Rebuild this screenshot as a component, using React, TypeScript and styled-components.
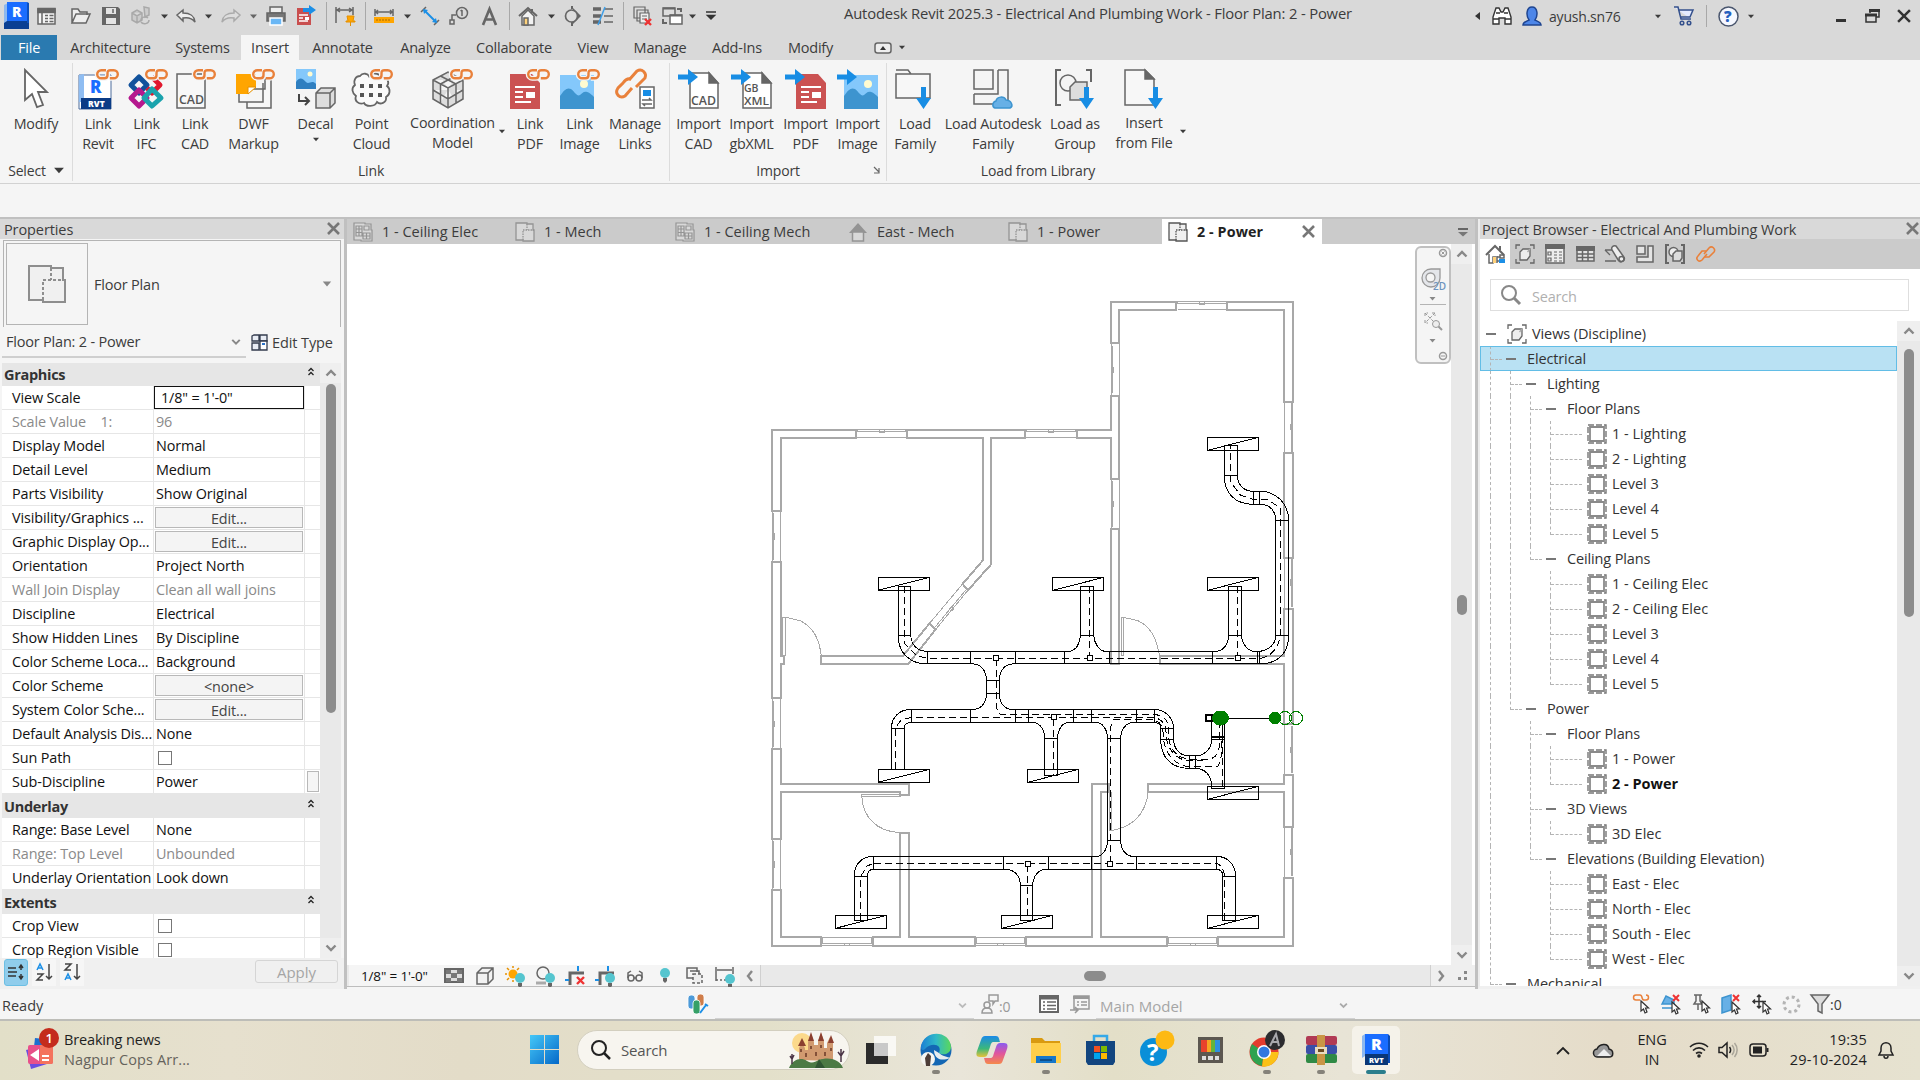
import React from "react";
import styled, { createGlobalStyle, css } from "styled-components";

const FONT = `"Open Sans", "Noto Sans", "Liberation Sans", sans-serif`;

const Global = createGlobalStyle`
  * { box-sizing: border-box; }
  html, body { margin: 0; padding: 0; background: #f5f5f5; overflow: hidden; }
  body { font-family: ${FONT}; font-size: 14px; color: #3c3c3c; }
  svg { display: block; flex: none; overflow: visible; }
`;

/* ------------------------------------------------------------------ */
/* Shared pieces                                                       */
/* ------------------------------------------------------------------ */

const Screen = styled.div`
  width: 1920px;
  height: 1080px;
  display: flex;
  flex-direction: column;
  background: #f5f5f5;
  overflow: hidden;
`;

const Cell = styled.span<{ $gap?: number; $w?: number }>`
  flex: none;
  display: flex;
  align-items: center;
  margin-left: ${(p) => p.$gap ?? 0}px;
  ${(p) => p.$w !== undefined && css`width: ${p.$w}px;`}
`;

const Label = styled.span<{
  $size?: number; $color?: string; $bold?: boolean; $track?: number; $gap?: number; $w?: number; $dy?: number;
}>`
  flex: none;
  white-space: pre;
  line-height: 20px;
  font-size: ${(p) => p.$size ?? 14}px;
  color: ${(p) => p.$color ?? "#3c3c3c"};
  font-weight: ${(p) => (p.$bold ? 700 : 400)};
  letter-spacing: ${(p) => p.$track ?? -0.2}px;
  margin-left: ${(p) => p.$gap ?? 0}px;
  margin-top: ${(p) => p.$dy ?? 0}px;
  ${(p) => p.$w !== undefined && css`width: ${p.$w}px;`}
`;

const Rule = styled.i<{ $gap?: number; $h?: number; $dy?: number }>`
  flex: none;
  width: 1px;
  height: ${(p) => p.$h ?? 28}px;
  margin-left: ${(p) => p.$gap ?? 0}px;
  margin-top: ${(p) => p.$dy ?? 0}px;
  background: #a8a8a8;
`;

type GlyphProps = { w: number; h?: number; vb?: string; children: React.ReactNode };
const Glyph = ({ w, h = w, vb, children }: GlyphProps) => (
  <svg width={w} height={h} viewBox={vb ?? `0 0 ${w} ${h}`} fill="none" stroke="#666" strokeWidth="1.5">
    {children}
  </svg>
);

const Caret = ({ c = "#3c3c3c", w = 7, h = 5 }: { c?: string; w?: number; h?: number }) => (
  <svg width={w} height={h} viewBox="0 0 7 5"><path d="M0 .5h7L3.500 4.500z" fill={c} /></svg>
);

const Chevron = ({ dir = "down", c = "#888", s = 12 }: { dir?: "up" | "down" | "left" | "right"; c?: string; s?: number }) => {
  const d = { up: "M1.500 8.500 6 4l4.500 4.500", down: "M1.500 3.500 6 8l4.500-4.500", left: "M8 1 4 6l4 5", right: "M4 1l4 5-4 5" }[dir];
  return <svg width={s} height={s} viewBox="0 0 12 12" fill="none" stroke={c} strokeWidth="2.400"><path d={d} /></svg>;
};

const Cross = ({ s = 13, c = "#777", t = 2.6 }: { s?: number; c?: string; t?: number }) => (
  <svg width={s} height={s} viewBox="0 0 13 13" stroke={c} strokeWidth={t}><path d="M1 1l11 11M12 1L1 12" /></svg>
);

/* ------------------------------------------------------------------ */
/* Title bar                                                           */
/* ------------------------------------------------------------------ */

const TitleBar = styled.header`
  height: 35px;
  flex: none;
  display: flex;
  align-items: center;
  background: #d9d9d9;
  padding: 0 9px 3px 3px;
`;

const Spacer = styled.span`flex: 1;`;

const RevitLogo = () => (
  <Glyph w={26} h={28}>
    <path d="M1 3l4-2v24l-4 2z" fill="#8db8ef" stroke="none" />
    <path d="M4 0h20v19H4z" fill="#1a6dff" stroke="none" />
    <path d="M1 21l3-2h22v8H1z" fill="#0a3f93" stroke="none" />
    <path d="M24 0l2 1v20h-2z" fill="#0b50c0" stroke="none" />
    <text x="9" y="15" fontFamily="Open Sans" fontWeight="800" fontSize="14" fill="#fff" stroke="none">R</text>
  </Glyph>
);

const QuickAccess = () => (
  <>
    <Cell><RevitLogo /></Cell>
    <Cell $gap={8}><Glyph w={19} h={18}><path d="M1 2h17v15H1z" fill="#f4f4f4" /><path d="M1 1.500h17v4H1z" fill="#666" /><path d="M5 6v11M8 8.500h3M8 11.500h3M8 14.500h3M12.500 8.500h4M12.500 11.500h4M12.500 14.500h4" /></Glyph></Cell>
    <Cell $gap={15}><Glyph w={20} h={18}><path d="M1 16V2h6l2 3h7v3M1 16l4-9h14l-4 9z" fill="#eee" /></Glyph></Cell>
    <Cell $gap={11}><Glyph w={18} h={18}><path d="M0 0h16l2 2v16H0z" fill="#666" stroke="none" /><path d="M4 1h10v6H4zM4 11h10v6H4z" fill="#e4e4e4" stroke="none" /><path d="M11 2v4" /></Glyph></Cell>
    <Cell $gap={11}><Glyph w={20} h={20}><g stroke="#a9a9a9"><path d="M1 7l5-3 5 3v7l-5 3-5-3zM1 7l5 3 5-3M6 10v7M13 1l5 1v7l-4 2z" fill="#ccc" /><path d="M10 14c0-3 5-4 7-2M18 14c0 4-6 5-8 2" /></g></Glyph></Cell>
    <Cell $gap={10}><Caret /></Cell>
    <Cell $gap={8}><Glyph w={20} h={14}><path d="M1 6l6-5v3c7 0 11 2 12 9-3-4-6-5-12-4v3z" fill="#eee" /></Glyph></Cell>
    <Cell $gap={9}><Caret /></Cell>
    <Cell $gap={9}><Glyph w={20} h={14}><path d="M19 6l-6-5v3C6 4 2 6 1 13c3-4 6-5 12-4v3z" fill="#ddd" stroke="#aaa" /></Glyph></Cell>
    <Cell $gap={9}><Caret c="#666" /></Cell>
    <Cell $gap={9}><Glyph w={20} h={20}><path d="M4 1h12v6H4z" fill="#eee" /><path d="M1 7h18v8H1z" fill="#777" /><path d="M4 12h12v7H4z" fill="#6ab7f5" stroke="#fff" /></Glyph></Cell>
    <Cell $gap={10}><Glyph w={20} h={20}><path d="M1 2h10l4 4v13H1z" fill="#c94f4f" stroke="none" /><path d="M3 9h9M3 12h4M3 15h9" stroke="#fff" /><path d="M9 11h4v3H9z" fill="#fff" stroke="none" /><path d="M7 2h6V-1l7 5-7 5V6H7z" fill="#1c8fe6" stroke="none" /></Glyph></Cell>
    <Rule $gap={10} />
    <Cell $gap={8}><Glyph w={21} h={20}><path d="M1 1v16M18 1v8M2 4h15M5 2L2 4l3 2M14 2l3 2-3 2" /><path d="M12 10h7l-1 5h2v1h-9v-1h2zM15.500 16v4" fill="#ffa500" stroke="#e59000" strokeWidth="1" /></Glyph></Cell>
    <Rule $gap={9} />
    <Cell $gap={8}><Glyph w={20} h={14}><path d="M1 0v7M19 0v7M2 3h16M4 1L2 3l2 2M16 1l2 2-2 2" /><path d="M0 8h20v6H0z" fill="#ffa500" stroke="none" /><path d="M3 10v2M6 10v2M9 10v2M12 10v2M15 10v2" stroke="#a86b00" strokeWidth="1" /></Glyph></Cell>
    <Cell $gap={10}><Caret /></Cell>
    <Cell $gap={9}><Glyph w={20} h={20}><path d="M4 4l12 12" stroke="#1c8fe6" strokeWidth="2" /><path d="M1 6l5-5M14 19l5-5" /><path d="M3 3l5 1-4 4zM17 17l-5-1 4-4z" fill="#1c8fe6" stroke="none" /></Glyph></Cell>
    <Cell $gap={10}><Glyph w={18} h={18}><circle cx="12" cy="6" r="5.500" /><path d="M12 3v6M10.500 4l1.500-1M6 8H2v6" /><path d="M0 13h4v4H0z" fill="#ddd" /></Glyph></Cell>
    <Cell $gap={14}><Glyph w={15} h={17}><path d="M1 17L7.500 1 14 17M3.500 11.500h8" strokeWidth="2.600" /></Glyph></Cell>
    <Rule $gap={12} />
    <Cell $gap={8}><Glyph w={20} h={20}><path d="M1 10l9-8 9 8M14 3v4" strokeWidth="2" /><path d="M4 10v9h12v-9l-6-6z" fill="#f2f2f2" /><path d="M6 12h4v7H6z" fill="#ffd27a" /></Glyph></Cell>
    <Cell $gap={10}><Caret /></Cell>
    <Cell $gap={9}><Glyph w={17} h={20}><path d="M8 0v3M8 16v4" strokeWidth="2" /><path d="M9 2l8 8-8 8z" fill="#666" stroke="none" /><circle cx="7.500" cy="10" r="6" fill="#ddd" strokeWidth="1.700" /></Glyph></Cell>
    <Cell $gap={12}><Glyph w={20} h={18}><path d="M0 2h8M0 9h8M0 15h8" strokeWidth="3.500" /><path d="M11 2h9M11 9h9M11 15h9" strokeWidth="1.500" /><path d="M12 0L5 18" stroke="#3c9ee8" /></Glyph></Cell>
    <Rule $gap={10} />
    <Cell $gap={9}><Glyph w={20} h={20}><path d="M1 1h11v11H1zM4 4h11v11H4z" fill="#ddd" strokeWidth="1.200" /><path d="M7 7h9v10H7zM9 10h5M9 13h5" fill="#eee" strokeWidth="1.200" /><path d="M12 13l6 6M18 13l-6 6" stroke="#e33" strokeWidth="2.400" /></Glyph></Cell>
    <Cell $gap={9}><Glyph w={20} h={18}><path d="M1 1h12v8H1z" fill="#ddd" /><path d="M8 8h12v9H8z" fill="#fff" /><path d="M8 8.500h12M1 1.500h12M15 2h4v3M1 12v4h4" strokeWidth="2" /></Glyph></Cell>
    <Cell $gap={7}><Caret /></Cell>
    <Cell $gap={10}><Glyph w={10} h={10}><path d="M0 1h10M1.500 4.500h7L5 8z" stroke="#333" fill="#333" /></Glyph></Cell>
  </>
);

const AccountArea = () => (
  <>
    <Cell><svg width="5" height="8"><path d="M5 0v8L0 4z" fill="#333" /></svg></Cell>
    <Cell $gap={12}><Glyph w={20} h={20}><path d="M1 18V11l3-9h3l2 4h2l2-4h3l3 9v7h-6v-6H7v6zM4 7h4M12 7h4M1 13h6M13 13h6" fill="#fff" stroke="#333" strokeWidth="1.400" /></Glyph></Cell>
    <Cell $gap={10}><Glyph w={20} h={20}><path d="M1 19c0-3 4-4 6-5-3-4-3-13 3-13s6 9 3 13c2 1 6 2 6 5z" fill="#4d86e8" stroke="#1f4590" /></Glyph></Cell>
    <Label $gap={7} $w={70} $track={-0.2} $dy={2}>ayush.sn76</Label>
    <Cell $gap={36}><Caret w={6} /></Cell>
    <Cell $gap={13}><Glyph w={20} h={20}><path d="M0 1h4l3 12h10M5 4h14l-3 7H7" fill="#e4ebff" stroke="#34508c" /><circle cx="8" cy="17" r="1.800" stroke="#34508c" /><circle cx="15" cy="17" r="1.800" stroke="#34508c" /></Glyph></Cell>
    <Rule $gap={12} $h={22} />
    <Cell $gap={11}><Glyph w={21} h={21}><circle cx="10.500" cy="10.500" r="9.500" fill="#f6f8ff" stroke="#4a566e" /><text x="6" y="16" fontFamily="Open Sans" fontWeight="800" fontSize="15" fill="#2660c0" stroke="none">?</text></Glyph></Cell>
    <Cell $gap={9}><Caret w={6} /></Cell>
    <Cell $gap={82}><Glyph w={10} h={10}><path d="M0 9.500h10" stroke="#333" strokeWidth="3" /></Glyph></Cell>
    <Cell $gap={19}><Glyph w={15} h={14}><path d="M5 4V1h9v7h-3" stroke="#333" /><path d="M4 1.500h11" stroke="#333" strokeWidth="3" /><path d="M1 6h10v7H1z" stroke="#333" /><path d="M0 6h12" stroke="#333" strokeWidth="3" /></Glyph></Cell>
    <Cell $gap={17}><Cross c="#333" s={14} t={2.3} /></Cell>
  </>
);

/* ------------------------------------------------------------------ */
/* Ribbon tabs                                                         */
/* ------------------------------------------------------------------ */

const TabBar = styled.nav`
  height: 25px;
  flex: none;
  display: flex;
  align-items: stretch;
  background: #d9d9d9;
  padding-left: 1px;
`;

const RibbonTab = styled.span<{ $w: number; $kind?: "file" | "active" }>`
  width: ${(p) => p.$w}px;
  display: flex;
  align-items: center;
  justify-content: center;
  letter-spacing: -0.2px;
  font-size: 14.5px;
  white-space: nowrap;
  padding-bottom: 1px;
  ${(p) => p.$kind === "file" && css`background: #2a7ab0; color: #fff;`}
  ${(p) => p.$kind === "active" && css`background: #f5f5f5;`}
`;

const TABS: [string, number, ("file" | "active")?][] = [
  ["File", 56, "file"], ["Architecture", 107], ["Systems", 77], ["Insert", 58, "active"], ["Annotate", 87],
  ["Analyze", 79], ["Collaborate", 98], ["View", 60], ["Manage", 74], ["Add-Ins", 80], ["Modify", 67],
];

/* ------------------------------------------------------------------ */
/* Ribbon                                                              */
/* ------------------------------------------------------------------ */

const Ribbon = styled.section`
  height: 124px;
  flex: none;
  display: flex;
  background: #f5f5f5;
  border-bottom: 1px solid #d2d2d2;
`;

const Panel = styled.div<{ $w: number }>`
  width: ${(p) => p.$w}px;
  margin-top: 3px;
  height: 118px;
  display: flex;
  flex-direction: column;
  border-right: 1px solid #dcdcdc;
  &:last-child { border-right: 0; }
`;

const PanelBody = styled.div<{ $pad?: number }>`
  height: 97px;
  display: flex;
  padding-left: ${(p) => p.$pad ?? 0}px;
`;

const PanelTitle = styled.div`
  position: relative;
  display: flex;
  justify-content: center;
  align-items: center;
  gap: 8px;
  height: 20px;
  font-size: 14px;
  letter-spacing: -0.15px;
`;

const Launcher = styled.span`
  position: absolute;
  right: 6px;
  top: 6px;
`;

const Tool = styled.div<{ $w: number; $up?: boolean }>`
  width: ${(p) => p.$w}px;
  flex: none;
  display: flex;
  flex-direction: column;
  align-items: center;
  padding-top: 6px;
  position: relative;
  span.text {
    margin-top: ${(p) => (p.$up ? 4 : 5)}px;
    text-align: center;
    white-space: pre;
    line-height: 20px;
    font-size: 14.3px;
    letter-spacing: -0.2px;
  }
`;

const SideArrow = styled.span<{ $below?: boolean }>`
  position: absolute;
  ${(p) => (p.$below ? css`left: 50%; margin-left: -3px; top: 74px;` : css`right: 0; top: 66px;`)}
`;

const CHAIN = "M10 1.200H5.200a4 4 0 0 0 0 8H8.500c2 0 3-1 3-3V4.200c0-2 1-3 3-3H17.800a4 4 0 0 1 0 8H13.800";
const LinkMark = ({ x = 17 }: { x?: number }) => (
  <g transform={`translate(${x} 0)`}>
    <path d={CHAIN} stroke="#f5f5f5" strokeWidth="5" />
    <path d={CHAIN} stroke="#e9813b" strokeWidth="2.400" />
  </g>
);
const BlueRight = () => <path d="M-1 5.500h10V0l10 8-10 8V10.500H-1z" fill="#188de4" stroke="none" />;
const BlueDown = ({ x = 26 }: { x?: number }) => <path d={`M${x} 18h5v11h5l-7.500 11-7.500-11h5z`} fill="#188de4" stroke="none" />;
const SheetText = ({ x, y, s = 13, children }: { x: number; y: number; s?: number; children: string }) => (
  <text x={x} y={y} fontFamily="Open Sans" fontWeight="600" fontSize={s} fill="#555" stroke="none" textLength={25} lengthAdjust="spacingAndGlyphs">{children}</text>
);
const Photo = ({ x = 0 }: { x?: number }) => (
  <g transform={`translate(${x} 6)`} stroke="none">
    <path d="M0 0h34v34H0z" fill="#84c8fb" />
    <path d="M0 21c4-6 7-9 11-7 4 3 6 8 9 6s5-7 14 2v12H0z" fill="#3d94cf" />
    <circle cx="24" cy="9" r="4" fill="#fffbd0" />
  </g>
);
const PdfPage = ({ x = 0 }: { x?: number }) => (
  <g transform={`translate(${x} 5)`} stroke="none">
    <path d="M0 0h22l8 9v26H0z" fill="#cb5252" />
    <path d="M5 13h20M5 18h8M5 23h8M5 28h16" stroke="#fff" strokeWidth="2" />
    <path d="M16 18h9v6h-9z" fill="#fff" />
  </g>
);
const Page = ({ x = 10 }: { x?: number }) => (
  <g transform={`translate(${x} 4)`}><path d="M1 0h19l9 10v25H1z" fill="#fff" /><path d="M20 0v10h9z" fill="#666" /></g>
);

const TOOL_ICONS: Record<string, React.ReactNode> = {
  modify: <Glyph w={26} h={40}><path d="M2 1v30l7-6 5 13 6-2-5-13h9z" fill="#fff" strokeWidth="1.800" /></Glyph>,
  revit: <Glyph w={38} h={40}><path d="M0 6h32v34H0z" fill="#fff" stroke="#4d6d9c" strokeWidth="1" /><path d="M0 6l5-1v28H0z" fill="#8fbdf2" stroke="none" /><path d="M2 29h30v11H2z" fill="#0b3c86" stroke="none" /><text x="11" y="24" fontFamily="Open Sans" fontWeight="800" fontSize="17" fill="#1a6dff" stroke="none">R</text><text x="9" y="38" fontFamily="Open Sans" fontWeight="800" fontSize="8.500" fill="#fff" stroke="none">RVT</text><LinkMark /></Glyph>,
  ifc: <Glyph w={38} h={40}><g strokeWidth="5" strokeLinejoin="round"><path d="M11 8l8 8-8 8-8-8z" stroke="#12529c" /><path d="M24 8l8 8-8 8-5-5" stroke="#e0182d" /><path d="M11 21l8 8-8 8-8-8z" stroke="#b5188e" /><path d="M24 20l9 9-9 8-8-8z" stroke="#1aa3ad" /></g><LinkMark /></Glyph>,
  cad: <Glyph w={38} h={40}><path d="M1 5h28v34H1z" fill="#f7f7f7" /><SheetText x={3} y={35}>CAD</SheetText><LinkMark /></Glyph>,
  dwf: <Glyph w={38} h={40}><path d="M10 20h20V10h6v29H12V33M4 25v8h24V14" fill="#f7f7f7" /><path d="M1 5h20v13l-8 7H1z" fill="#ffa500" stroke="none" /><path d="M13 25v-7h8z" fill="#fff" stroke="#e59000" strokeWidth="1" /><LinkMark x={17} /></Glyph>,
  decal: <Glyph w={40} h={40}><path d="M0 0h20v20H0z" fill="#84c8fb" stroke="none" /><path d="M0 13c4-6 7-3 10 0s6-3 10 2v5H0z" fill="#2f7fc0" stroke="none" /><circle cx="14" cy="5" r="2.500" fill="#fffbd0" stroke="none" /><path d="M3 25v7h9M9 28l4 4-4 4" stroke="#444" strokeWidth="2" /><path d="M20 24l5-5h14v15l-5 5H20zM20 24h14v15M34 24l5-5" fill="#ddd" /></Glyph>,
  cloud: <Glyph w={40} h={40}><path d="M8 7c3-4 8-2 9 0 2-4 10-3 12 1 6-1 9 5 6 9 4 3 3 9-1 11 1 6-6 8-9 5-2 5-11 5-13 1-5 2-10-2-8-7-4-3-5-8-1-11-2-5 1-9 5-9z" strokeWidth="1.800" fill="#fafafa" /><g fill="#555" stroke="none"><path d="M8 15h4v4H8zM17 15h4v4h-4zM26 15h4v4h-4zM8 24h4v4H8zM17 24h4v4h-4zM26 24h4v4h-4z" /></g><LinkMark x={18} /></Glyph>,
  coord: <Glyph w={42} h={40}><path d="M1 11L16 3l15 8v19l-15 9-15-9zM1 11l15 8 15-8M16 19v20M1 21l15 9 15-9M8.500 7L24 15v19M23.500 7L8.500 15v19" fill="#ddd" /><LinkMark x={18} /></Glyph>,
  pdf: <Glyph w={40} h={40}><PdfPage /><LinkMark x={17} /></Glyph>,
  image: <Glyph w={40} h={40}><Photo /><LinkMark x={17} /></Glyph>,
  manage: <Glyph w={40} h={40}><g stroke="#e9813b" strokeWidth="3"><path d="M14 11l8-9c5-3 10 2 8 7l-9 9" /><path d="M16 10c-3-1-6 1-8 4l-5 5c-4 6 2 11 7 8l7-8" /></g><path d="M25 18h14v21H25z" fill="#fff" /><path d="M28 21h8v6h-8z" fill="#188de4" stroke="none" /><path d="M27 31h9l-2-2M37 35h-9l2 2" /></Glyph>,
  icad: <Glyph w={40} h={40}><Page /><SheetText x={12} y={36}>CAD</SheetText><BlueRight /></Glyph>,
  igb: <Glyph w={40} h={40}><Page /><text x="12" y="23" fontFamily="Open Sans" fontWeight="600" fontSize="10.500" fill="#555" stroke="none">GB</text><SheetText x={12} y={36} s={10.5}>XML</SheetText><BlueRight /></Glyph>,
  ipdf: <Glyph w={40} h={40}><PdfPage x={10} /><BlueRight /></Glyph>,
  iimage: <Glyph w={40} h={40}><Photo x={6} /><BlueRight /></Glyph>,
  family: <Glyph w={40} h={40}><path d="M1 1h12l3 4h19v24H1V5h15" fill="#f7f7f7" /><BlueDown /></Glyph>,
  autodesk: <Glyph w={40} h={40}><path d="M1 1h19v19H1zM25 1h10v30M1 25h24V1M1 25v10h19" fill="none" /><path d="M22 39c-3-1-3-6 1-7 1-5 8-5 10-1 5 0 8 6 4 8z" fill="#67b0e6" stroke="#3d94cf" /></Glyph>,
  group: <Glyph w={40} h={40}><path d="M6 1H1v35h5M31 1h5v12" strokeWidth="2" /><circle cx="13" cy="14" r="8" fill="#f4f4f4" /><path d="M15 18l5-5h12v13l-4 5H15z" fill="#ddd" /><BlueDown x={29} /></Glyph>,
  file: <Glyph w={40} h={40}><path d="M1 1h20l9 9v26H1z" fill="#f7f7f7" /><path d="M21 1v9h9z" fill="#666" /><BlueDown x={29} /></Glyph>,
};

type ToolSpec = { icon: string; text: string; w: number; side?: boolean; below?: boolean };
const PANELS: { title: string; w: number; pad: number; tools: ToolSpec[] }[] = [
  {
    title: "Link", w: 597, pad: 1,
    tools: [
      { icon: "revit", text: "Link\nRevit", w: 48 }, { icon: "ifc", text: "Link\nIFC", w: 49 },
      { icon: "cad", text: "Link\nCAD", w: 48 }, { icon: "dwf", text: "DWF\nMarkup", w: 69 },
      { icon: "decal", text: "Decal", w: 55, below: true }, { icon: "cloud", text: "Point\nCloud", w: 57 },
      { icon: "coord", text: "Coordination\nModel", w: 105, side: true }, { icon: "pdf", text: "Link\nPDF", w: 50 },
      { icon: "image", text: "Link\nImage", w: 49 }, { icon: "manage", text: "Manage\nLinks", w: 62 },
    ],
  },
  {
    title: "Import", w: 217, pad: 3,
    tools: [
      { icon: "icad", text: "Import\nCAD", w: 51 }, { icon: "igb", text: "Import\ngbXML", w: 55 },
      { icon: "ipdf", text: "Import\nPDF", w: 53 }, { icon: "iimage", text: "Import\nImage", w: 51 },
    ],
  },
  {
    title: "Load from Library", w: 302, pad: 5,
    tools: [
      { icon: "family", text: "Load\nFamily", w: 46 }, { icon: "autodesk", text: "Load Autodesk\nFamily", w: 110 },
      { icon: "group", text: "Load as\nGroup", w: 54 }, { icon: "file", text: "Insert\nfrom File", w: 84, side: true },
    ],
  },
];

const OptionsBar = styled.div`
  height: 35px;
  flex: none;
  background: #f5f5f5;
  border-bottom: 2px solid #c0c0c0;
`;

/* ------------------------------------------------------------------ */
/* Workspace                                                           */
/* ------------------------------------------------------------------ */

const Workspace = styled.main`
  height: 770px;
  flex: none;
  display: flex;
`;

const PaneHeader = styled.div<{ $left?: number; $right?: number }>`
  height: 20px;
  flex: none;
  display: flex;
  align-items: center;
  justify-content: space-between;
  background: #d9d9d9;
  padding: 0 ${(p) => p.$right ?? 4}px 0 ${(p) => p.$left ?? 4}px;
  svg { margin-bottom: 1px; }
`;

/* Properties palette */

const Properties = styled.aside`
  width: 347px;
  flex: none;
  display: flex;
  flex-direction: column;
  background: #f5f5f5;
  border-right: 3px solid #c0c0c0;
`;

const TypeSelector = styled.div`
  margin: 1px 3px 0 3px;
  height: 87px;
  flex: none;
  display: flex;
  align-items: center;
  border: 1px solid #b4b4b4;
  border-bottom: 0;
  padding: 0 8px 0 2px;
`;

const Preview = styled.div`
  width: 82px;
  height: 82px;
  display: flex;
  align-items: center;
  justify-content: center;
  border: 1px solid #b4b4b4;
`;

const InstanceRow = styled.div`
  height: 36px;
  flex: none;
  display: flex;
  align-items: flex-start;
`;

const InstanceCombo = styled.div`
  width: 244px;
  height: 31px;
  margin-left: 2px;
  display: flex;
  align-items: center;
  border-bottom: 2px solid #cfcfcf;
  padding: 1px 5px 0 4px;
`;

const EditType = styled.div`
  height: 31px;
  display: flex;
  align-items: center;
  margin-left: 5px;
`;

const GridArea = styled.div`
  height: 595px;
  flex: none;
  margin-left: 2px;
  display: flex;
`;

const Grid = styled.div`
  width: 318px;
  overflow: hidden;
  background: #fff;
`;

const GroupHead = styled.div<{ $h?: number }>`
  height: ${(p) => p.$h ?? 24}px;
  display: flex;
  align-items: center;
  justify-content: space-between;
  background: #e6e6e6;
  padding: 0 5px 0 2px;
  font-weight: 700;
  color: #333;
  font-size: 14.5px;
  letter-spacing: -0.3px;
  svg { margin-bottom: 6px; }
`;

const Row = styled.div<{ $muted?: boolean }>`
  height: 24px;
  display: grid;
  grid-template-columns: 152px 151px 15px;
  border-bottom: 1px solid #e6e6e6;
  color: ${(p) => (p.$muted ? "#8a8a8a" : "#111")};
  white-space: pre;
  font-size: 14.4px;
  line-height: 23px;
  letter-spacing: -0.12px;
`;

const NameCell = styled.span`
  border-right: 1px solid #e6e6e6;
  padding-left: 10px;
  overflow: hidden;
`;

const ValueCell = styled.span`
  border-right: 1px solid #e6e6e6;
  padding-left: 2px;
  display: flex;
  align-items: center;
`;

const ScaleInput = styled.span`
  width: 150px;
  height: 23px;
  margin-left: -2px;
  border: 1px solid #111;
  padding-left: 6px;
  line-height: 21px;
`;

const CellButton = styled.span`
  width: 148px;
  height: 21px;
  margin-left: -1px;
  border: 1px solid #b8b8b8;
  background: #f4f4f4;
  color: #444;
  text-align: center;
  line-height: 21px;
`;

const Check = styled.span`
  width: 14px;
  height: 14px;
  margin: 1px 0 0 2px;
  border: 1px solid #777;
  background: #fff;
`;

const MoreButton = styled.span`
  width: 12px;
  height: 21px;
  margin: 1px 0 0 2px;
  border: 1px solid #b8b8b8;
  background: #f5f5f5;
`;

const VScroll = styled.div<{ $w: number }>`
  width: ${(p) => p.$w}px;
  flex: none;
  display: flex;
  flex-direction: column;
  align-items: center;
  background: #e9e9e9;
`;

const ScrollCap = styled.span`
  width: 100%;
  height: 20px;
  flex: none;
  display: flex;
  align-items: center;
  justify-content: center;
  background: #efefef;
`;

const Thumb = styled.span<{ $w: number; $h: number; $before?: number }>`
  flex: none;
  width: ${(p) => p.$w}px;
  height: ${(p) => p.$h}px;
  margin-top: ${(p) => p.$before ?? 0}px;
  border-radius: 5px;
  background: #8c8c8c;
`;

const SortBar = styled.div`
  flex: 1;
  display: flex;
  align-items: center;
  gap: 4px;
  background: #f0f0f0;
  padding: 0 6px 3px 4px;
`;

const SortButton = styled.span<{ $on?: boolean }>`
  width: 24px;
  height: 27px;
  border-radius: ${(p) => (p.$on ? 3 : 0)}px;
  display: flex;
  align-items: center;
  justify-content: center;
  background: ${(p) => (p.$on ? "#90cdec" : "#f6f6f6")};
  border: ${(p) => (p.$on ? "1px solid #6cbfe4" : "0")};
`;

const Apply = styled.span`
  width: 83px;
  height: 23px;
  margin: 0 0 1px auto;
  border: 1px solid #d5d5d5;
  border-radius: 3px;
  text-align: center;
  line-height: 22px;
  color: #a5a5a5;
  font-size: 15px;
`;

type RowSpec = { n: string; v?: string; kind?: "button" | "check" | "input"; muted?: boolean; more?: boolean };
const GRAPHICS: RowSpec[] = [
  { n: "View Scale", v: `1/8" = 1'-0"`, kind: "input" },
  { n: "Scale Value    1:", v: "96", muted: true },
  { n: "Display Model", v: "Normal" },
  { n: "Detail Level", v: "Medium" },
  { n: "Parts Visibility", v: "Show Original" },
  { n: "Visibility/Graphics ...", v: "Edit...", kind: "button" },
  { n: "Graphic Display Op...", v: "Edit...", kind: "button" },
  { n: "Orientation", v: "Project North" },
  { n: "Wall Join Display", v: "Clean all wall joins", muted: true },
  { n: "Discipline", v: "Electrical" },
  { n: "Show Hidden Lines", v: "By Discipline" },
  { n: "Color Scheme Loca...", v: "Background" },
  { n: "Color Scheme", v: "<none>", kind: "button" },
  { n: "System Color Sche...", v: "Edit...", kind: "button" },
  { n: "Default Analysis Dis...", v: "None" },
  { n: "Sun Path", kind: "check" },
  { n: "Sub-Discipline", v: "Power", more: true },
];
const UNDERLAY: RowSpec[] = [
  { n: "Range: Base Level", v: "None" },
  { n: "Range: Top Level", v: "Unbounded", muted: true },
  { n: "Underlay Orientation", v: "Look down" },
];
const EXTENTS: RowSpec[] = [{ n: "Crop View", kind: "check" }, { n: "Crop Region Visible", kind: "check" }];

const DoubleUp = () => (
  <svg width="8" height="9" viewBox="0 0 8 9" fill="none" stroke="#222" strokeWidth="1.300"><path d="M1.500 4L4 1.500 6.500 4M1.500 8L4 5.500 6.500 8" /></svg>
);

const PropRows = ({ rows }: { rows: RowSpec[] }) => (
  <>
    {rows.map((r) => (
      <Row key={r.n} $muted={r.muted}>
        <NameCell>{r.n}</NameCell>
        <ValueCell>
          {r.kind === "button" ? <CellButton>{r.v}</CellButton>
            : r.kind === "check" ? <Check />
              : r.kind === "input" ? <ScaleInput>{r.v}</ScaleInput> : r.v}
        </ValueCell>
        {r.more ? <MoreButton /> : <span />}
      </Row>
    ))}
  </>
);

const PlanGlyph = ({ s, c = "#888", f = "#f0f0f0", t = 1.3 }: { s: number; c?: string; f?: string; t?: number }) => (
  <svg width={s} height={s} viewBox="0 0 20 20" fill={f} stroke={c} strokeWidth={t}>
    <path d="M1 1h11v1h6v6h1v11H8v-1H1z" /><path d="M8 18V8h11M12 2v6" strokeDasharray="1.500 1" fill="none" />
  </svg>
);

const PropertiesPane = () => (
  <Properties>
    <PaneHeader><Label $track={-0.1} $size={14.5} $dy={1}>Properties</Label><Cross /></PaneHeader>
    <TypeSelector>
      <Preview><PlanGlyph s={40} c="#8e8e8e" t={1} /></Preview>
      <Label $gap={6} $size={14.5} $dy={2}>Floor Plan</Label>
      <Spacer />
      <Caret w={10} h={6} c="#888" />
    </TypeSelector>
    <InstanceRow>
      <InstanceCombo><Label $size={14.5}>Floor Plan: 2 - Power</Label><Spacer /><Chevron s={10} /></InstanceCombo>
      <EditType>
        <Glyph w={17} h={17}><g stroke="#333b4d" strokeWidth="1.300"><path d="M1 2l2-1h5v6H1zM9 1h7v6H9zM1 9h7v7H1z" fill="#e8ecf4" /><path d="M9 7h7v9H9z" fill="#fff" /></g><path d="M11 9h3v2h-3z" fill="#2c72c8" stroke="none" /></Glyph>
        <Label $gap={4} $size={14.5} $track={-0.1}>Edit Type</Label>
      </EditType>
    </InstanceRow>
    <GridArea>
      <Grid>
        <GroupHead $h={23}>Graphics<DoubleUp /></GroupHead>
        <PropRows rows={GRAPHICS} />
        <GroupHead>Underlay<DoubleUp /></GroupHead>
        <PropRows rows={UNDERLAY} />
        <GroupHead>Extents<DoubleUp /></GroupHead>
        <PropRows rows={EXTENTS} />
      </Grid>
      <VScroll $w={21}>
        <ScrollCap><Chevron dir="up" /></ScrollCap>
        <Thumb $w={10} $h={329} $before={1} />
        <Spacer />
        <ScrollCap><Chevron /></ScrollCap>
      </VScroll>
    </GridArea>
    <SortBar>
      <SortButton $on><Glyph w={16} h={16}><path d="M0 4h8M0 8h9M0 12h8M13 1v5M13 15v-5M11 4l2-3 2 3M11 12l2 3 2-3" stroke="#333" /></Glyph></SortButton>
      <SortButton><Glyph w={18} h={18}><path d="M2 7l3-6 3 6M3 5h4" stroke="#1c8fe6" /><path d="M2 11h6l-6 6h6M14 1v14M11 13l3 3 3-3" stroke="#444" /></Glyph></SortButton>
      <SortButton><Glyph w={18} h={18}><path d="M2 17l3-6 3 6M3 15h4" stroke="#1c8fe6" /><path d="M2 1h6L2 7h6M14 1v14M11 13l3 3 3-3" stroke="#444" /></Glyph></SortButton>
      <Apply>Apply</Apply>
    </SortBar>
  </Properties>
);

/* Drawing view */

const View = styled.section`
  width: 1131px;
  flex: none;
  display: flex;
  flex-direction: column;
  background: #fff;
  border-right: 3px solid #c0c0c0;
`;

const ViewTabs = styled.div`
  height: 25px;
  flex: none;
  display: flex;
  background: #cbcbcb;
`;

const ViewTab = styled.div<{ $w: number; $active?: boolean }>`
  width: ${(p) => p.$w}px;
  flex: none;
  display: flex;
  align-items: center;
  justify-content: flex-start;
  gap: 9px;
  padding: 0 7px 0 6px;
  background: ${(p) => (p.$active ? "#fff" : "transparent")};
`;

const ViewBody = styled.div`
  height: 721px;
  flex: none;
  display: flex;
`;

const Canvas = styled.div`
  position: relative;
  width: 1104px;
  flex: none;
  background: #fff;
`;

const NavBar = styled.div`
  position: absolute;
  right: 0;
  top: 2px;
  width: 36px;
  height: 118px;
  border: 2px solid #c0c0c0;
  border-radius: 6px;
  background: #f5f5f5;
`;

const CeilingGlyph = () => (
  <svg width="20" height="20" viewBox="0 0 20 20" fill="#d8d8d8" stroke="#949494" strokeWidth="1.200">
    <path d="M1 1h11v1h6v6h1v11H8v-1H1z" /><path d="M3 4h6v10H3zM3 7h6M3 10.500h6M6 4v10M11 4h5v4h-5zM10 11h7v6h-7zM10 14h7M13.500 11v6" />
  </svg>
);
const ElevationGlyph = () => (
  <svg width="20" height="20" viewBox="0 0 20 20"><path d="M10 1l9 10H1z" fill="#949494" /><path d="M4.500 10h11v9h-11z" fill="#d8d8d8" stroke="#949494" strokeWidth="1.500" /></svg>
);

/* Plan geometry shares one stretched coordinate grid; strokes keep their screen width. */
const UPPER = "translate(760 290) scale(.357143 .333333)";
const LOWER = "translate(760 640) scale(.357143 .333333)";

const WALLS_UP = [
  "M983 160V36H1165V60H1005V160Z", "M1308 36H1493V336H1467V60H1308Z", "M1467 490H1493V804H1467Z",
  "M983 420V317H1005V568H983V444H888V420Z", "M983 718H1005V1122H983Z", "M268 420H33V662H60V444H268Z",
  "M412 420H741V444H648V822L583 900L567 882L625 810V444H412Z", "M475 1000L400 1098H172V1122H415L492 1018Z",
  "M33 816H60V1098H66V1122H60V1225H33Z",
];
const WALLS_LOW = [
  "M33 328H60V432H417V464H393V456H60V598H33Z", "M33 751H60V890H171V917H33Z", "M317 890H393V578H417V890H602V917H317Z",
  "M745 890H930V432H978V456H955V890H1140V917H745Z", "M1283 890H1467V713H1493V917H1283Z",
  "M1467 560V456H1087V432H1467V404H1493V560Z", "M1467 253V72H1120V48H1467V-94H1493V253Z",
];
const THIN_UP = [
  "M1170 36V42H1306V36M1170 60H1306M1230 36h15v8h-15z", "M272 420V426H408V420M272 444H408M334 420h15v8h-15z",
  "M745 420V426H884V420M745 444H884M807 420h15v8h-15z", "M983 160V317M988 168V310M1006 160V317M983 232h7v16h-7z",
  "M983 568V718M988 574V712M1006 568V718M983 634h7v16h-7z", "M1469 336V490M1489 340V486M1491 340V486M1485 404h6v16h-6z",
  "M1469 804V956M1489 808V952M1491 808V952M1485 870h6v16h-6z", "M36 662V816M38 668V810M58 662V816M35 730h6v18h-6z",
  "M1165 36H1308M268 420H412M741 420H888",
  "M567 882L475 1000M583 900L492 1018M578 898L488 1014M530 955l7-4 4 8-8 4z",
  "M63 982H72V1098M63 982V1098M72 982L112 992C145 1008 162 1040 169 1080L172 1098",
  "M1012 982H1018V1096H1012ZM1018 982L1058 992C1090 1008 1108 1040 1115 1080L1119 1098",
];
const THIN_LOW = [
  "M36 175V328M38 182V322M58 175V328M35 245h5v16h-5z", "M36 598V751M38 604V745M58 598V751M35 666h5v16h-5z",
  "M171 892H317M176 892V912H236M250 912H312V892M236 910h14v7h-14z", "M602 892H745M607 892V912H666M681 912H741V892M666 910h15v7h-15z",
  "M1140 892H1283M1145 892V912H1205M1220 912H1279V892M1205 910h15v7h-15z", "M171 917H317M602 917H745M1140 917H1283",
  "M1469 253V404M1489 257V400M1491 257V400M1485 322h6v16h-6z", "M1469 560V713M1489 564V709M1491 564V709M1485 628h6v16h-6z",
  "M285 463H393V469H285ZM285 469C288 530 325 575 393 578", "M978 456V572H985V456M985 572C1045 560 1080 520 1087 456",
];
const DUCT_UP = [
  "M387 1036V889H422V1036ZM387 1036C387 1090 420 1122 470 1122M422 1036C424 1065 440 1084 470 1084",
  "M470 1084H868C885 1080 897 1060 897 1036V889H934V1036C936 1060 950 1084 968 1084H1280C1300 1080 1312 1060 1312 1036V889H1348V1036C1350 1060 1365 1084 1385 1084H1393C1425 1084 1444 1062 1444 1036V691C1444 665 1430 643 1400 643H1382C1330 643 1300 610 1300 556V466H1337V556C1337 585 1355 604 1382 604H1400C1445 604 1480 640 1480 691V1036C1480 1090 1450 1122 1398 1122H706",
  "M470 1122H598M470 1084V1122M590 1084V1122M715 1084V1122M852 1084V1122M978 1084V1122M1267 1084V1122M1393 1084V1122M1398 1084V1122",
  "M897 1036H934M1312 1036H1348M1444 1036H1480M1444 691H1480M1382 604V643M1398 604V643M1300 556H1337",
];
const DASH_UP = [
  "M404 889V1060L440 1098L470 1105H1400C1430 1102 1450 1075 1458 1036V655L1420 628H1380L1345 615L1317 575V466", "M922 889V1100", "M1338 889V1100",
];
const DUCT_LOW = [
  "M598 72C620 72 634 95 634 121V160C634 190 618 208 598 208M706 72C685 72 670 95 670 121V160C670 190 685 208 706 208M634 121H670M634 160H670",
  "M598 208H424C390 208 368 232 368 265V388M404 388V265C404 255 410 247 424 247H766C785 250 797 270 797 295V406H832V295C834 270 845 247 865 247H940C960 247 973 270 973 295V601C973 630 958 649 942 649H318C285 649 264 672 264 709V841H301V709C301 695 308 688 318 688H690C715 690 729 710 729 737V841H763V737C765 710 778 688 800 688H1278C1290 688 1296 695 1296 709V841H1332V709C1332 675 1310 649 1278 649H1045C1025 649 1010 630 1010 601V295C1010 270 1025 247 1045 247H1104C1115 247 1122 255 1122 265V298C1122 350 1150 385 1202 385H1218C1245 385 1265 405 1265 440V445H1301V245M1265 245V299C1265 325 1245 348 1218 348H1202C1175 348 1158 325 1158 298V265C1158 235 1135 208 1104 208H706",
  "M424 208V247M590 208V247M715 208V247M751 208V247M877 208V247M928 208V247M1054 208V247M1104 208V247M590 247H720",
  "M368 265H404M797 295H832M973 295H1010M973 601H1010M1122 265H1158M1122 298H1158M1202 348V385M1218 348V385M1265 289H1301M1265 299H1301M1265 294H1301",
  "M318 649V688M682 649V688M808 649V688M928 649V688M1054 649V688M1278 649V688M264 709H301M729 737H763M1296 709H1332",
];
const DASH_LOW = [
  "M662 58V205L672 223H1095C1130 223 1145 240 1145 275V298C1148 330 1170 354 1202 358H1255C1280 354 1287 335 1287 300V250",
  "M380 388V262L395 240L424 232H1095C1125 234 1137 250 1137 280C1137 325 1165 360 1202 363H1240",
  "M981 668V262L990 238H1095C1118 242 1129 255 1129 285C1131 340 1160 375 1202 381H1280C1292 370 1294 340 1294 250",
  "M822 236V406M318 670H1278C1292 674 1300 690 1300 709V841M282 841V709L300 678L318 670M749 676V841M1294 440V250",
];
const DIFFUSERS_UP = [[1253, 442], [331, 862], [820, 862], [1253, 862]];
const DIFFUSERS_LOW = [[331, 388], [749, 388], [1253, 439], [211, 826], [677, 826], [1253, 826]];
const NODES_LOW = [[661, 54], [924, 54], [1338, 54], [823, 231], [750, 672], [981, 672]];
const diffuser = ([x, y]: number[]) => `M${x} ${y}h143v39h-143zM${x} ${y + 39}l143 -39`;

const Strokes = ({ list, at, color, width, dash }: { list: string[]; at: string; color: string; width: number; dash?: string }) => (
  <g transform={at} stroke={color} strokeWidth={width} strokeDasharray={dash} fill="none">
    {list.map((d) => <path key={d} d={d} vectorEffect="non-scaling-stroke" />)}
  </g>
);

const FloorPlan = () => (
  <svg width="1104" height="721" viewBox="347 244 1104 721" shapeRendering="crispEdges">
    <Strokes list={WALLS_UP} at={UPPER} color="#a8a8a8" width={2} />
    <Strokes list={WALLS_LOW} at={LOWER} color="#a8a8a8" width={2} />
    <Strokes list={THIN_UP} at={UPPER} color="#a8a8a8" width={1} />
    <Strokes list={THIN_LOW} at={LOWER} color="#a8a8a8" width={1} />
    <Strokes list={DUCT_UP} at={UPPER} color="#000" width={1} />
    <Strokes list={DUCT_LOW} at={LOWER} color="#000" width={1} />
    <Strokes list={DASH_UP} at={UPPER} color="#000" width={1} dash="7 4" />
    <Strokes list={DASH_LOW} at={LOWER} color="#000" width={1} dash="7 4" />
    <Strokes list={DIFFUSERS_UP.map(diffuser)} at={UPPER} color="#000" width={1} />
    <Strokes list={DIFFUSERS_LOW.map(diffuser)} at={LOWER} color="#000" width={1} />
    <g transform={LOWER} stroke="#000" fill="#fff">
      {NODES_LOW.map(([x, y]) => <rect key={`${x}-${y}`} x={x - 7} y={y - 7} width="14" height="14" vectorEffect="non-scaling-stroke" />)}
    </g>
    <path d="M1229 718H1270" stroke="#000" />
    <rect x="1206" y="715" width="6" height="6" fill="#fff" stroke="#000" strokeWidth="2" />
    <ellipse cx="1220.500" cy="718" rx="8.500" ry="7.500" fill="#008000" />
    <ellipse cx="1275" cy="718" rx="6" ry="6.500" fill="#008000" />
    <circle cx="1285" cy="718" r="6.500" fill="none" stroke="#008000" />
    <circle cx="1296" cy="718" r="6.500" fill="none" stroke="#008000" />
  </svg>
);

const NavigationBar = () => (
  <NavBar>
    <svg width="32" height="114" viewBox="0 0 32 114" fill="none" stroke="#999">
      <circle cx="26" cy="5" r="3.500" strokeWidth="1.500" /><path d="M24.500 3.500l3 3M27.500 3.500l-3 3" />
      <path d="M23 21H14a9 9 0 1 0 9 9z" fill="#e4e6ea" strokeWidth="1.300" /><circle cx="13.500" cy="29.500" r="4.500" fill="#f5f5f5" strokeWidth="1.300" />
      <text x="16" y="42" fontFamily="Open Sans" fontWeight="600" fontSize="10" fill="#6d93bd" stroke="none">2D</text>
      <path d="M12.500 49h6l-3 3.500zM12.500 91h6l-3 3.500z" fill="#888" stroke="none" />
      <path d="M3 56.500h26" stroke="#b4b4b4" />
      <path d="M8 65l10 10M18 65L8 75M8 68v-3h3M15 65h3v3M8 72v3h3" strokeDasharray="3 1.500" />
      <circle cx="19" cy="76" r="3.500" fill="#eee" /><path d="M21.500 78.500l3.500 3.500" strokeWidth="2" />
      <circle cx="26" cy="108" r="3.500" strokeWidth="1.500" /><path d="M24 108h4" />
    </svg>
  </NavBar>
);

const ViewControls = styled.div`
  height: 22px;
  flex: none;
  display: flex;
  align-items: center;
  background: #e9e9e9;
  border-bottom: 1px solid #bdbdbd;
`;

const ControlGroup = styled.div`
  width: 391px;
  height: 21px;
  margin-left: 2px;
  display: flex;
  align-items: center;
  background: #f5f5f5;
  padding-left: 12px;
`;

const EdgeCap = styled.span<{ $w: number }>`
  width: ${(p) => p.$w}px;
  height: 21px;
  flex: none;
  display: flex;
  align-items: center;
  justify-content: center;
  background: #efefef;
`;

const HTrack = styled.span`
  width: 671px;
  height: 21px;
  flex: none;
  display: flex;
  align-items: center;
  padding-left: 323px;
  border-left: 1px solid #d0d0d0;
  border-right: 1px solid #d0d0d0;
`;

const HThumb = styled.span`
  width: 22px;
  height: 10px;
  border-radius: 5px;
  background: #8c8c8c;
`;

const Bulb = ({ x, y }: { x: number; y: number }) => (
  <g stroke="none"><circle cx={x} cy={y} r="5" fill="#55c5cf" /><path d={`M${x - 2} ${y + 5}h4v3l-2 2-2-2z`} fill="#666" /></g>
);

const ViewControlBar = () => (
  <ViewControls>
    <ControlGroup>
      <Label $size={13.5} $track={-0.15} $w={68} $color="#111">{`1/8" = 1'-0"`}</Label>
      <Cell $gap={15}><Glyph w={20} h={15}><path d="M1 1h18v13H1z" fill="#ddd" strokeWidth="2" /><path d="M2 2h5v4H2zM13 2h5v4h-5zM7 5h6v5H7zM2 10h5v4H2zM13 10h5v4h-5z" fill="#777" stroke="none" /></Glyph></Cell>
      <Cell $gap={12}><Glyph w={18} h={18}><path d="M1 6l5-5h11v11l-5 5H1zM1 6h11v11M12 6l5-5" fill="#f2f2f2" /></Glyph></Cell>
      <Cell $gap={11}><Glyph w={20} h={18}><circle cx="8" cy="7" r="4.500" fill="#ffa500" stroke="none" /><path d="M8-1v2M0 7h2M2 1l2 2M14 1l-2 2M2 13l2-2M8 13v2" stroke="#e59000" /><Bulb x={15} y={11} /></Glyph></Cell>
      <Cell $gap={10}><Glyph w={20} h={18}><circle cx="8" cy="6" r="6" fill="#f4f4f4" /><path d="M1 16h10" stroke="#aaa" strokeWidth="3" /><Bulb x={15} y={11} /></Glyph></Cell>
      <Cell $gap={10}><Glyph w={20} h={18}><path d="M5 18V6h14" strokeWidth="3" /><path d="M0 13h4M13-1v5" stroke="#1c8fe6" strokeWidth="2" /><path d="M12 10l7 7M19 10l-7 7" stroke="#e33" strokeWidth="2.400" /></Glyph></Cell>
      <Cell $gap={10}><Glyph w={20} h={18}><path d="M5 18V6h14" strokeWidth="3" /><path d="M0 13h4M13-1v5" stroke="#1c8fe6" strokeWidth="2" /><Bulb x={15} y={11} /></Glyph></Cell>
      <Cell $gap={12}><Glyph w={16} h={12}><circle cx="4" cy="8" r="3" /><circle cx="12" cy="8" r="3" /><path d="M1 8V3l3-2M15 8V3l-3-2M7 8h2" /></Glyph></Cell>
      <Cell $gap={16}><Glyph w={12} h={18}><Bulb x={6} y={6} /></Glyph></Cell>
      <Cell $gap={15}><Glyph w={18} h={18}><path d="M8 11H1V1h10v4M4 4h9v3" /><path d="M7 7h9v9H7z" strokeDasharray="3 2" fill="#eee" /></Glyph></Cell>
      <Cell $gap={11}><Glyph w={20} h={18}><path d="M1 0v14M18 0v7M2 3h15" /><path d="M1 13h12" strokeDasharray="2 2" /><Bulb x={15} y={12} /></Glyph></Cell>
    </ControlGroup>
    <EdgeCap $w={20}><Chevron dir="left" /></EdgeCap>
    <HTrack><HThumb /></HTrack>
    <EdgeCap $w={20}><Chevron dir="right" /></EdgeCap>
    <EdgeCap $w={24}><svg width="10" height="10"><path d="M6 0h3v3H6zM0 6h3v3H0zM6 6h3v3H6z" fill="#888" /></svg></EdgeCap>
  </ViewControls>
);

const BottomStrip = styled.span`flex: 1; background: #f5f5f5;`;

const VIEW_TABS: [string, number, "ceiling" | "plan" | "elev"][] = [
  ["1 - Ceiling Elec", 162, "ceiling"], ["1 - Mech", 160, "plan"], ["1 - Ceiling Mech", 173, "ceiling"],
  ["East - Mech", 160, "elev"], ["1 - Power", 160, "plan"],
];

const DrawingView = () => (
  <View>
    <ViewTabs>
      {VIEW_TABS.map(([t, w, k]) => (
        <ViewTab key={t} $w={w}>
          {k === "ceiling" ? <CeilingGlyph /> : k === "plan" ? <PlanGlyph s={20} c="#949494" f="#d8d8d8" /> : <ElevationGlyph />}
          <Label $size={14.5} $track={0}>{t}</Label>
        </ViewTab>
      ))}
      <ViewTab $w={160} $active><PlanGlyph s={20} c="#555" /><Label $bold $color="#222" $size={14.3} $track={0.1}>2 - Power</Label><Spacer /><Cross s={13} /></ViewTab>
      <Cell $gap={136}><Glyph w={10} h={10}><path d="M0 2h10" strokeWidth="2" /><path d="M0 5h10L5 9.500z" fill="#777" stroke="none" /></Glyph></Cell>
    </ViewTabs>
    <ViewBody>
      <Canvas><FloorPlan /><NavigationBar /></Canvas>
      <VScroll $w={21}>
        <ScrollCap><Chevron dir="up" /></ScrollCap>
        <Thumb $w={10} $h={20} $before={331} />
        <Spacer />
        <ScrollCap><Chevron /></ScrollCap>
      </VScroll>
    </ViewBody>
    <ViewControlBar />
    <BottomStrip />
  </View>
);

/* Project browser */

const Browser = styled.aside`
  width: 442px;
  flex: none;
  display: flex;
  flex-direction: column;
  background: #fff;
  border-left: 2px solid #ececec;
  border-bottom: 3px solid #f0f0f0;
`;

const BrowserTabs = styled.div`
  height: 30px;
  flex: none;
  display: flex;
  background: #cbcbcb;
`;

const BrowserTab = styled.span<{ $on?: boolean }>`
  width: 30px;
  display: flex;
  align-items: center;
  justify-content: center;
  background: ${(p) => (p.$on ? "#fff" : "transparent")};
`;

const SearchBox = styled.div`
  width: 419px;
  height: 32px;
  flex: none;
  margin: 10px 0 10px 10px;
  display: flex;
  align-items: center;
  gap: 11px;
  border: 1px solid #dedede;
  padding-left: 10px;
`;

const TreeArea = styled.div`
  flex: 1;
  min-height: 0;
  display: flex;
`;

const Tree = styled.div`
  width: 417px;
  height: 100%;
  overflow: hidden;
`;

const TreeRow = styled.div<{ $on?: boolean }>`
  height: 25px;
  display: flex;
  align-items: center;
  background: ${(p) => (p.$on ? "#b9e1f3" : "transparent")};
  outline: ${(p) => (p.$on ? "1px solid #62bde6" : "none")};
  outline-offset: -1px;
`;

const Indent = styled.span<{ $line?: boolean; $end?: boolean }>`
  flex: none;
  width: 20px;
  height: 25px;
  display: flex;
  align-items: flex-start;
  &::before {
    content: "";
    width: 0;
    height: ${(p) => (p.$end ? 14 : 25)}px;
    margin-left: 10px;
    border-left: ${(p) => (p.$line ? "1px dashed #b4b4b4" : "0")};
  }
`;

const Branch = styled.span<{ $w: number }>`
  flex: none;
  width: ${(p) => p.$w}px;
  margin-left: -9px;
  border-top: 1px dashed #b4b4b4;
  margin-top: 2px;
`;

const Minus = styled.span`
  flex: none;
  width: 10px;
  height: 2px;
  background: #777;
`;

const ViewsGlyph = () => (
  <Glyph w={20} h={20}><g strokeWidth="1.300"><path d="M1 5V1h4M15 1h4v4M19 15v4h-4M5 19H1v-4" /><path d="M5 8l3-3h7v7l-3 4H5z" fill="#eee" /><path d="M12.500 8L15 5" stroke="#aaa" /></g></Glyph>
);
const SheetGlyph = () => (
  <Glyph w={20} h={20}><path d="M1 1h18v18H1z" strokeDasharray="6 2" strokeWidth="1.400" stroke="#777" /><path d="M3 3h14v14H3z" stroke="#8a8a8a" fill="#fff" strokeWidth="1.800" /></Glyph>
);

type Node = { t: string; d: number; leaf?: boolean; bold?: boolean; end?: boolean; lines: number[] };
const TREE: Node[] = [
  { t: "Electrical", d: 1, lines: [0] },
  { t: "Lighting", d: 2, lines: [0, 1] },
  { t: "Floor Plans", d: 3, lines: [0, 1, 2] },
  ...["1 - Lighting", "2 - Lighting", "Level 3", "Level 4", "Level 5"].map((t, i) => ({ t, d: 4, leaf: true, end: i === 4, lines: [0, 1, 2, 3] })),
  { t: "Ceiling Plans", d: 3, end: true, lines: [0, 1, 2] },
  ...["1 - Ceiling Elec", "2 - Ceiling Elec", "Level 3", "Level 4", "Level 5"].map((t, i) => ({ t, d: 4, leaf: true, end: i === 4, lines: [0, 1, 3] })),
  { t: "Power", d: 2, end: true, lines: [0, 1] },
  { t: "Floor Plans", d: 3, lines: [0, 2] },
  { t: "1 - Power", d: 4, leaf: true, lines: [0, 2, 3] },
  { t: "2 - Power", d: 4, leaf: true, bold: true, end: true, lines: [0, 2, 3] },
  { t: "3D Views", d: 3, lines: [0, 2] },
  { t: "3D Elec", d: 4, leaf: true, end: true, lines: [0, 2, 3] },
  { t: "Elevations (Building Elevation)", d: 3, end: true, lines: [0, 2] },
  ...["East - Elec", "North - Elec", "South - Elec", "West - Elec"].map((t, i) => ({ t, d: 4, leaf: true, end: i === 3, lines: [0, 3] })),
  { t: "Mechanical", d: 1, end: true, lines: [0] },
];

const TreeNode = ({ n }: { n: Node }) => (
  <TreeRow $on={n.t === "Electrical"}>
    {Array.from({ length: n.d }, (_, i) => (
      <Indent key={i} $line={n.lines.includes(i)} $end={n.end && i === n.d - 1} />
    ))}
    <Branch $w={n.leaf ? 31 : 11} />
    {n.leaf ? <Cell $gap={5}><SheetGlyph /></Cell> : <Cell $gap={4}><Minus /></Cell>}
    <Label $gap={n.leaf ? 5 : 11} $size={14.5} $track={n.leaf ? 0 : -0.13} $bold={n.bold} $color={n.bold ? "#111" : "#333"}>{n.t}</Label>
  </TreeRow>
);

const ProjectBrowser = () => (
  <Browser>
    <PaneHeader $left={2} $right={1}><Label $size={14.5} $track={-0.07} $dy={1}>Project Browser - Electrical And Plumbing Work</Label><Cross /></PaneHeader>
    <BrowserTabs>
      <BrowserTab $on><Glyph w={20} h={20}><path d="M1 11l9-9 9 9M15 2v4" strokeWidth="2" /><path d="M4 10v9h4v-6h3" /><path d="M8 13h3v6H8z" fill="#ffd27a" stroke="none" /><path d="M12 12v7M12 13h3M12 17h3M15 11h4v3h-4z" /><path d="M14 15h6v4h-6z" fill="#1c8fe6" stroke="none" /></Glyph></BrowserTab>
      <BrowserTab><ViewsGlyph /></BrowserTab>
      <BrowserTab><Glyph w={20} h={20}><path d="M1 1h18v18H1z" fill="#eee" /><path d="M0 2.500h20" strokeWidth="5" /><path d="M3 8h3v3H3zM3 14h3v3H3zM9 8h3M14 8h3M9 11h3M14 11h3M9 14h3M14 14h3M9 17h3M14 17h3" strokeWidth="1.200" /></Glyph></BrowserTab>
      <BrowserTab><Glyph w={19} h={16}><path d="M1 1h17v14H1zM1 8h17M1 11.500h17M6.500 4v11M12 4v11" fill="#e4e4e4" /><path d="M0 2.500h19" strokeWidth="5" /></Glyph></BrowserTab>
      <BrowserTab><Glyph w={20} h={18}><path d="M0 5h7M0 5l5 5M0 16h11" strokeWidth="1.300" /><path d="M11 1l7.500 10.500a3 3 0 0 1-5 4L7 5a3 3 0 0 1 4-4z" fill="#eee" /><circle cx="16.500" cy="14" r="2.500" /></Glyph></BrowserTab>
      <BrowserTab><Glyph w={18} h={18}><path d="M1 1h8v8H1zM12 1h5v16H1v-5h11z" fill="#e4e4e4" /></Glyph></BrowserTab>
      <BrowserTab><Glyph w={20} h={20}><path d="M4 1H1v18h3M16 1h3v18h-3" strokeWidth="2" /><circle cx="8.500" cy="8" r="4.500" fill="#eee" /><path d="M8 10l3-3h6v7l-2 3H8z" fill="#ddd" /></Glyph></BrowserTab>
      <BrowserTab><Glyph w={19} h={16}><g stroke="#e9813b" strokeWidth="1.600"><path d="M8 8l5-6c3-3 7 1 5 4l-5 5H9" /><path d="M11 8l-5 6c-3 3-7-1-4-4l4-5h4" /></g></Glyph></BrowserTab>
    </BrowserTabs>
    <SearchBox><Glyph w={20} h={20}><circle cx="8" cy="8" r="7" stroke="#888" strokeWidth="2" /><path d="M13 13l6 6" stroke="#888" strokeWidth="3" /></Glyph><Label $color="#b0b0b0" $size={14.5} $dy={3}>Search</Label></SearchBox>
    <TreeArea>
      <Tree>
        <TreeRow><Cell $gap={6}><Minus /></Cell><Cell $gap={11}><ViewsGlyph /></Cell><Label $gap={5} $size={14.5} $track={-0.1} $color="#333">Views (Discipline)</Label></TreeRow>
        {TREE.map((n, i) => <TreeNode key={i} n={n} />)}
      </Tree>
      <VScroll $w={23}>
        <ScrollCap><Chevron dir="up" /></ScrollCap>
        <Thumb $w={10} $h={268} $before={8} />
        <Spacer />
        <ScrollCap><Chevron /></ScrollCap>
      </VScroll>
    </TreeArea>
  </Browser>
);

/* ------------------------------------------------------------------ */
/* Status bar                                                          */
/* ------------------------------------------------------------------ */

const StatusBar = styled.footer`
  height: 32px;
  flex: none;
  display: flex;
  align-items: center;
  background: #f5f5f5;
  border-bottom: 2px solid #bdbdb8;
  padding-left: 2px;
`;

const StatusCombo = styled.div<{ $w: number; $gap: number }>`
  width: ${(p) => p.$w}px;
  height: 28px;
  margin: 2px 0 0 ${(p) => p.$gap}px;
  display: flex;
  align-items: center;
  border-bottom: 1px solid #d2d2d2;
  padding: 2px 7px 0 4px;
`;

const Cursor = ({ x, y }: { x: number; y: number }) => (
  <path d={`M${x} ${y}v10l2.500-2 1.500 4 2-1-1.500-4h3z`} fill="#fff" stroke="#333" strokeWidth="1.200" />
);

const Status = () => (
  <StatusBar>
    <Label $w={686} $size={14.5} $track={0} $dy={3}>Ready</Label>
    <Cell><Glyph w={20} h={20}><g stroke="#fff" strokeWidth=".8"><rect x="0" y="1" width="7" height="14" rx="3" fill="#4d9ad8" /><rect x="9" y="0" width="7" height="12" rx="3" fill="#cf7d4a" /><rect x="5" y="6" width="7" height="14" rx="3" fill="#35a067" /></g><path d="M12 19l6-8M17 10l3 2" stroke="#1c8fe6" strokeWidth="2" /></Glyph></Cell>
    <StatusCombo $w={259} $gap={7}><Spacer /><Chevron s={9} c="#bbb" /></StatusCombo>
    <Cell $gap={7}><Glyph w={18} h={20}><g stroke="#999"><circle cx="6" cy="11" r="3" /><path d="M1 19c0-4 2-5 5-5s5 1 5 5zM8 1h9v6h-3l-2 3V7H8z" /></g></Glyph></Cell>
    <Label $w={39} $color="#999" $dy={5}>:0</Label>
    <Cell $gap={1}><Glyph w={20} h={18}><path d="M1 1h18v16H1z" fill="#fff" strokeWidth="2" /><path d="M0 2.500h20" strokeWidth="4" /><path d="M4 7h2M8 7h9M4 10.500h2M8 10.500h9M4 14h2M8 14h9" /></Glyph></Cell>
    <Cell $gap={11}><Glyph w={20} h={18}><g stroke="#999"><path d="M4 1h15v13H4z" /><path d="M3 2.500h16" strokeWidth="3" /><path d="M7 7h2M11 7h6M7 10h2M11 10h6M0 15h8M5 12l3 3-3 3" /></g></Glyph></Cell>
    <StatusCombo $w={259} $gap={6}><Label $color="#a5a5a5" $size={15} $track={0}>Main Model</Label><Spacer /><Chevron s={9} c="#aaa" /></StatusCombo>
    <Cell $gap={277}><Glyph w={18} h={20}><path d="M8 6H4a2.500 2.500 0 0 1 0-5h4c3 0 1 5 4 5h2a2.500 2.500 0 0 0 0-5" stroke="#e9813b" /><Cursor x={9} y={7} /></Glyph></Cell>
    <Cell $gap={12}><Glyph w={19} h={20}><path d="M0 10l4-8 8 4v4zM0 14h11" stroke="#3d94cf" fill="#67b0e6" /><path d="M11 1l6 6M17 1l-6 6" stroke="#e33" strokeWidth="2" /><Cursor x={10} y={8} /></Glyph></Cell>
    <Cell $gap={12}><Glyph w={17} h={20}><path d="M1 1h8M3 1v6l-2 3h8l-2-3V1M5 10v6" /><Cursor x={9} y={7} /></Glyph></Cell>
    <Cell $gap={11}><Glyph w={20} h={20}><path d="M1 4l9-3v15l-9 3z" fill="#67b0e6" stroke="#3d94cf" /><path d="M12 1l6 6M18 1l-6 6" stroke="#e33" strokeWidth="2" /><Cursor x={11} y={8} /></Glyph></Cell>
    <Cell $gap={11}><Glyph w={19} h={20}><path d="M7 1v13M1 7.500h13M5 3l2-2 2 2M5 12l2 2 2-2M3 5.500l-2 2 2 2" stroke="#333" /><Cursor x={11} y={8} /></Glyph></Cell>
    <Cell $gap={11}><Glyph w={19} h={19}><circle cx="9.500" cy="9.500" r="7.500" strokeDasharray="3 2.890" strokeWidth="3" stroke="#b4b4b4" /></Glyph></Cell>
    <Cell $gap={9}><Glyph w={20} h={20}><path d="M1 1h18l-7 9v9l-4-2v-7z" fill="#ddd" /></Glyph></Cell>
    <Label $track={0} $dy={2}>:0</Label>
  </StatusBar>
);

/* ------------------------------------------------------------------ */
/* Taskbar                                                             */
/* ------------------------------------------------------------------ */

const Taskbar = styled.footer`
  height: 59px;
  flex: none;
  display: flex;
  align-items: center;
  background: linear-gradient(90deg, #e2dfc8 0%, #e6e0ce 12%, #e3dcc8 24%, #e3e0ca 40%, #e9e5d9 50%, #e3dfc8 58%, #e8e4d6 70%, #e5dcc9 84%, #e6e2d0 100%);
  padding: 0 0 1px 25px;
`;

const AppSlot = styled.span<{ $gap?: number; $w: number; $active?: boolean; $dot?: boolean }>`
  position: relative;
  flex: none;
  width: ${(p) => p.$w}px;
  height: ${(p) => (p.$active ? 48 : 40)}px;
  margin-left: ${(p) => p.$gap ?? 0}px;
  display: flex;
  align-items: center;
  justify-content: center;
  border-radius: 5px;
  background: ${(p) => (p.$active ? "#f5f2ea" : "transparent")};
  ${(p) => (p.$dot || p.$active) && css`
    &::after {
      content: "";
      position: absolute;
      bottom: ${p.$active ? 0 : -4}px;
      width: ${p.$active ? 20 : 8}px;
      height: 4px;
      border-radius: 2px;
      background: ${p.$active ? "#2a7d8c" : "#85827a"};
    }
  `}
`;

const SearchPill = styled.div`
  width: 273px;
  height: 40px;
  flex: none;
  margin-left: 17px;
  display: flex;
  align-items: center;
  border-radius: 20px;
  border: 1px solid #d3cfbf;
  background: #f7f5ef;
  padding: 0 5px 0 13px;
`;

const TwoLine = styled.div<{ $gap: number; $w: number; $align?: string; $track?: number }>`
  width: ${(p) => p.$w}px;
  flex: none;
  margin-left: ${(p) => p.$gap}px;
  text-align: ${(p) => p.$align ?? "left"};
  font-size: 14.5px;
  line-height: 20px;
  letter-spacing: ${(p) => p.$track ?? -0.15}px;
  white-space: nowrap;
  color: #1f1f1f;
  small { font-size: inherit; color: #66635c; letter-spacing: 0.1px; }
`;

const Castle = () => (
  <svg width="55" height="36" viewBox="0 0 55 36">
    <circle cx="13" cy="11" r="10" fill="#fbd98b" />
    <path d="M10 28V16l3-5 3 5v2h3V10l3-8 3 8v3h4V9l3-8 3 8v7h3v-5l3-6 3 6v18z" fill="#d19a70" />
    <path d="M9 14l4-8 4 8zM19 9l3-9 3 9zM29 9l3-9 3 9zM39 11l3-8 3 8z" fill="#8b3f2f" />
    <path d="M12 17v3M22 14v3M32 13v3M42 16v3M27 20v4M36 20v4M17 21v4" stroke="#6a3826" strokeWidth="1.500" />
    <path d="M0 36c4-9 12-11 18-7 6 3 7 1 12-1 8-3 20-2 24 8z" fill="#4c7a45" />
    <path d="M26 36l4-9 6 9z" fill="#2f5533" />
    <path d="M3 32V22M1 24l2 3 2-4M52 30V17M49 20l3 4 3-5" stroke="#4b3547" strokeWidth="1.500" fill="none" />
  </svg>
);

const TaskbarRow = () => (
  <Taskbar>
    <Glyph w={34} h={40}>
      <g stroke="none">
        <path d="M1 20l20-5 4 18-19 6z" fill="#6a4de0" /><path d="M10 8l18 2v16H8z" fill="#1d6fd0" />
        <rect x="3" y="15" width="25" height="19" rx="2" fill="#e8508a" /><path d="M15 15h11a2 2 0 0 1 2 2v15a2 2 0 0 1-2 2H15z" fill="#f4735d" />
        <path d="M5 25l9-6v12zM17 25h7v2h-7zM17 29h7v2h-7z" fill="#fff" />
        <circle cx="24" cy="8" r="10" fill="#c42b1c" />
        <text x="20.500" y="13" fontFamily="Open Sans" fontSize="13" fontWeight="600" fill="#fff">1</text>
      </g>
    </Glyph>
    <TwoLine $gap={5} $w={466}>Breaking news<br /><small>Nagpur Cops Arr...</small></TwoLine>
    <Glyph w={30} h={30}><defs><linearGradient id="win" x1="0" y1="0" x2="1" y2="1"><stop stopColor="#45c8f8" /><stop offset="1" stopColor="#0468c8" /></linearGradient></defs><path d="M0 0h14v14H0zM15 0h14v14H15zM0 15h14v14H0zM15 15h14v14H15z" fill="url(#win)" stroke="none" /></Glyph>
    <SearchPill>
      <Glyph w={20} h={20}><circle cx="8" cy="8" r="7" stroke="#222" strokeWidth="2" /><path d="M13 13l6 6" stroke="#222" strokeWidth="2.500" /></Glyph>
      <Label $gap={10} $size={15} $color="#555">Search</Label><Spacer /><Castle />
    </SearchPill>
    <AppSlot $gap={16} $w={30}><Glyph w={30} h={30}><path d="M0 8h22v21H0z" fill="#2b2b2b" stroke="none" /><path d="M8 1h22v20H8z" fill="#fff" fillOpacity=".75" stroke="none" /></Glyph></AppSlot>
    <AppSlot $gap={24} $w={32} $dot>
      <Glyph w={32} h={32}><defs><linearGradient id="edge" x1="0" y1="0" x2="1" y2="0"><stop stopColor="#1b7fd4" /><stop offset=".5" stopColor="#2fb8c8" /><stop offset="1" stopColor="#5bd85a" /></linearGradient></defs><g stroke="none"><circle cx="16" cy="16" r="15.500" fill="#1467b4" /><path d="M1 13C4-5 30-4 31 13c0 7-8 9-12 6 4-9-8-11-14-4-2 2-4 1-4-2z" fill="url(#edge)" /><path d="M14 16c0 8 6 12 16 8-2-1-8-2-11-5z" fill="#e6ecef" /><circle cx="8" cy="25" r="7" fill="#f5f5f2" /><path d="M8 19l3 3-1 10H6l-1-8z" fill="#4d3d38" /></g></Glyph>
    </AppSlot>
    <AppSlot $gap={24} $w={32}>
      <Glyph w={32} h={30}>
        <defs>
          <linearGradient id="copA" x1="0" y1="0" x2="0" y2="1"><stop stopColor="#1b8ae8" /><stop offset=".6" stopColor="#3cb87a" /><stop offset="1" stopColor="#e8c23a" /></linearGradient>
          <linearGradient id="copB" x1="0" y1="0" x2="0" y2="1"><stop stopColor="#8a5cf0" /><stop offset=".5" stopColor="#e0559e" /><stop offset="1" stopColor="#f58a4a" /></linearGradient>
        </defs>
        <g stroke="none">
          <path d="M9 1h11c3 0 3 3 4 6h-6c-3 0-3 2-4 5l-2 6c-1 3-2 4-4 4H4c-4 0-4-3-3-6L5 5c1-3 2-4 4-4z" fill="url(#copA)" />
          <path d="M23 29H12c-3 0-3-3-4-6h6c3 0 3-2 4-5l2-6c1-3 2-4 4-4h4c4 0 4 3 3 6l-4 11c-1 3-2 4-4 4z" fill="url(#copB)" />
        </g>
      </Glyph>
    </AppSlot>
    <AppSlot $gap={22} $w={32} $dot><Glyph w={30} h={28}><g stroke="none"><path d="M0 2h11l3 3h15v10H0z" fill="#d99a10" /><path d="M0 7h30v20H0z" fill="#ffcf4a" /><path d="M5 20h20v7H5z" fill="#1677c9" /><path d="M9 23h12v2H9z" fill="#0d4f8c" /></g></Glyph></AppSlot>
    <AppSlot $gap={23} $w={30}><Glyph w={29} h={30}><path d="M8 8V1h13v7" stroke="#35a9e8" strokeWidth="2.500" /><path d="M0 6h29v21l-2 3H2l-2-3z" fill="#12457f" stroke="none" /><g stroke="none"><path d="M8 11h6v6H8z" fill="#f25022" /><path d="M15 11h6v6h-6z" fill="#7fba00" /><path d="M8 18h6v6H8z" fill="#00a4ef" /><path d="M15 18h6v6h-6z" fill="#ffb900" /></g></Glyph></AppSlot>
    <AppSlot $gap={25} $w={34}><Glyph w={34} h={36}><g stroke="none"><ellipse cx="13.500" cy="20" rx="13.500" ry="14" fill="#0a8fd8" /><text x="7" y="29" fontFamily="Open Sans" fontSize="24" fontWeight="700" fill="#fff">?</text><circle cx="25" cy="8" r="9.500" fill="#fdb913" /></g></Glyph></AppSlot>
    <AppSlot $gap={24} $w={25}><Glyph w={25} h={28}><g stroke="none"><path d="M0 1h25v26H0z" fill="#5c5750" /><path d="M3 4h6v12H3z" fill="#e8432c" /><path d="M9 4h4v12H9z" fill="#f5a623" /><path d="M13 4h4v12h-4z" fill="#64b43c" /><path d="M17 4h5v12h-5z" fill="#2f8fe0" /><path d="M4 20h4v4H4zM10 20h5v4h-5zM17 20h4v4h-4z" fill="#ddd" /></g></Glyph></AppSlot>
    <AppSlot $gap={26} $w={36} $dot>
      <Glyph w={36} h={38}><g stroke="none"><circle cx="15" cy="21" r="14.500" fill="#e33b2e" /><path d="M15 21L3 13a14.500 14.500 0 0 0 10 22z" fill="#2fa24f" /><path d="M15 21h14.500A14.500 14.500 0 0 1 13 35.500z" fill="#fbc117" /><circle cx="15" cy="21" r="7" fill="#fff" /><circle cx="15" cy="21" r="5.500" fill="#2f78e0" /><circle cx="26" cy="9" r="10" fill="#2c2c2f" /><path d="M21 15l6-12 3 12M23 11h7" stroke="#a8a8ad" strokeWidth="2" /></g></Glyph>
    </AppSlot>
    <AppSlot $gap={20} $w={32} $dot><Glyph w={31} h={30}><g stroke="none"><rect y="1" width="31" height="9" rx="2" fill="#b13a54" /><rect y="10" width="31" height="9" rx="2" fill="#3a4fa8" /><rect y="19" width="31" height="9" rx="2" fill="#2f8a45" /><path d="M11 0h8v30h-8z" fill="#c99545" /><path d="M9 12h12v7H9z" fill="#e8dcc0" /><path d="M12 14h6v3h-6z" fill="#6b4a20" /></g></Glyph></AppSlot>
    <AppSlot $gap={15} $w={48} $active>
      <Glyph w={28} h={32}><path d="M3 0h23v20H3z" fill="#1a6dff" stroke="none" /><path d="M0 2l3-2v22l-3 2z" fill="#8db8ef" stroke="none" /><path d="M26 0l2 2v27h-2z" fill="#0a4bb5" stroke="none" /><path d="M3 20h23v11H3z" fill="#0a3778" stroke="none" /><text x="9" y="16" fontFamily="Open Sans" fontWeight="800" fontSize="16" fill="#fff" stroke="none">R</text><text x="7" y="29" fontFamily="Open Sans" fontWeight="800" fontSize="7.500" fill="#fff" stroke="none">RVT</text></Glyph>
    </AppSlot>
    <Cell $gap={156}><Glyph w={14} h={9}><path d="M1 8l6-6 6 6" stroke="#222" strokeWidth="1.800" /></Glyph></Cell>
    <Cell $gap={23}><Glyph w={21} h={15}><path d="M5 14a4 4 0 0 1-1-8C6 1 15-1 16 6c5 1 5 8 0 8z" fill="#999" stroke="#222" /><path d="M4 13l7-7 7 7z" fill="#eee" stroke="none" /></Glyph></Cell>
    <TwoLine $gap={20} $w={36} $align="center">ENG<br />IN</TwoLine>
    <Cell $gap={19}><Glyph w={20} h={16}><g stroke="#222" strokeWidth="1.600"><path d="M1 5c5-5 13-5 18 0M4 8.500c3.500-3.500 8.500-3.500 12 0M7 11.500c2-1.500 4-1.500 6 0" /><circle cx="10" cy="14" r="1" fill="#222" /></g></Glyph></Cell>
    <Cell $gap={9}><Glyph w={20} h={16}><path d="M1 5.500h3L9 1v14l-5-4.500H1z" stroke="#222" /><path d="M11.500 5c1.500 2 1.500 4 0 6" stroke="#222" /><path d="M14 3c2.500 3 2.500 7 0 10M16.500 1c3.500 4 3.500 10 0 14" stroke="#aaa69a" /></Glyph></Cell>
    <Cell $gap={11}><Glyph w={20} h={14}><rect x="1" y="1" width="16" height="12" rx="3" stroke="#222" /><rect x="4" y="3.500" width="9" height="7" fill="#222" stroke="none" /><path d="M18.500 5v4" stroke="#222" strokeWidth="2" /></Glyph></Cell>
    <TwoLine $gap={8} $w={90} $align="right" $track={0.15}>19:35<br />29-10-2024</TwoLine>
    <Cell $gap={10}><Glyph w={18} h={19}><path d="M2 14h14l-2-4V7c0-7-10-7-10 0v3zM7 15c0 3 4 3 4 0" stroke="#222" /></Glyph></Cell>
  </Taskbar>
);

/* ------------------------------------------------------------------ */

const App = () => (
  <Screen>
    <Global />
    <TitleBar>
      <QuickAccess />
      <Label $gap={128} $dy={-7} $size={14.8} $track={-0.17}>Autodesk Revit 2025.3 - Electrical And Plumbing Work - Floor Plan: 2 - Power</Label>
      <Spacer />
      <AccountArea />
    </TitleBar>
    <TabBar>
      {TABS.map(([t, w, kind]) => <RibbonTab key={t} $w={w} $kind={kind}>{t}</RibbonTab>)}
      <Cell $gap={30}><Glyph w={18} h={12}><rect x="1" y="1" width="16" height="10" rx="2.500" fill="#eee" /><path d="M6 8l3-4 3 4z" fill="#333" stroke="none" /></Glyph></Cell>
      <Cell $gap={7}><Caret w={6} /></Cell>
    </TabBar>
    <Ribbon>
      <Panel $w={73}>
        <PanelBody><Tool $w={72}>{TOOL_ICONS.modify}<span className="text">Modify</span></Tool></PanelBody>
        <PanelTitle>Select<Caret w={10} h={7} /></PanelTitle>
      </Panel>
      {PANELS.map((p) => (
        <Panel key={p.title} $w={p.w}>
          <PanelBody $pad={p.pad}>
            {p.tools.map((t) => (
              <Tool key={t.icon} $w={t.w} $up={t.side}>
                {TOOL_ICONS[t.icon]}
                <span className="text">{t.text}</span>
                {(t.side || t.below) && <SideArrow $below={t.below}><Caret w={6} /></SideArrow>}
              </Tool>
            ))}
          </PanelBody>
          <PanelTitle>
            {p.title}
            {p.title === "Import" && <Launcher><Glyph w={7} h={8}><path d="M1 1l5 5M6 2v5H1" strokeWidth="1.200" /></Glyph></Launcher>}
          </PanelTitle>
        </Panel>
      ))}
    </Ribbon>
    <OptionsBar />
    <Workspace>
      <PropertiesPane />
      <DrawingView />
      <ProjectBrowser />
    </Workspace>
    <Status />
    <TaskbarRow />
  </Screen>
);

export default App;
